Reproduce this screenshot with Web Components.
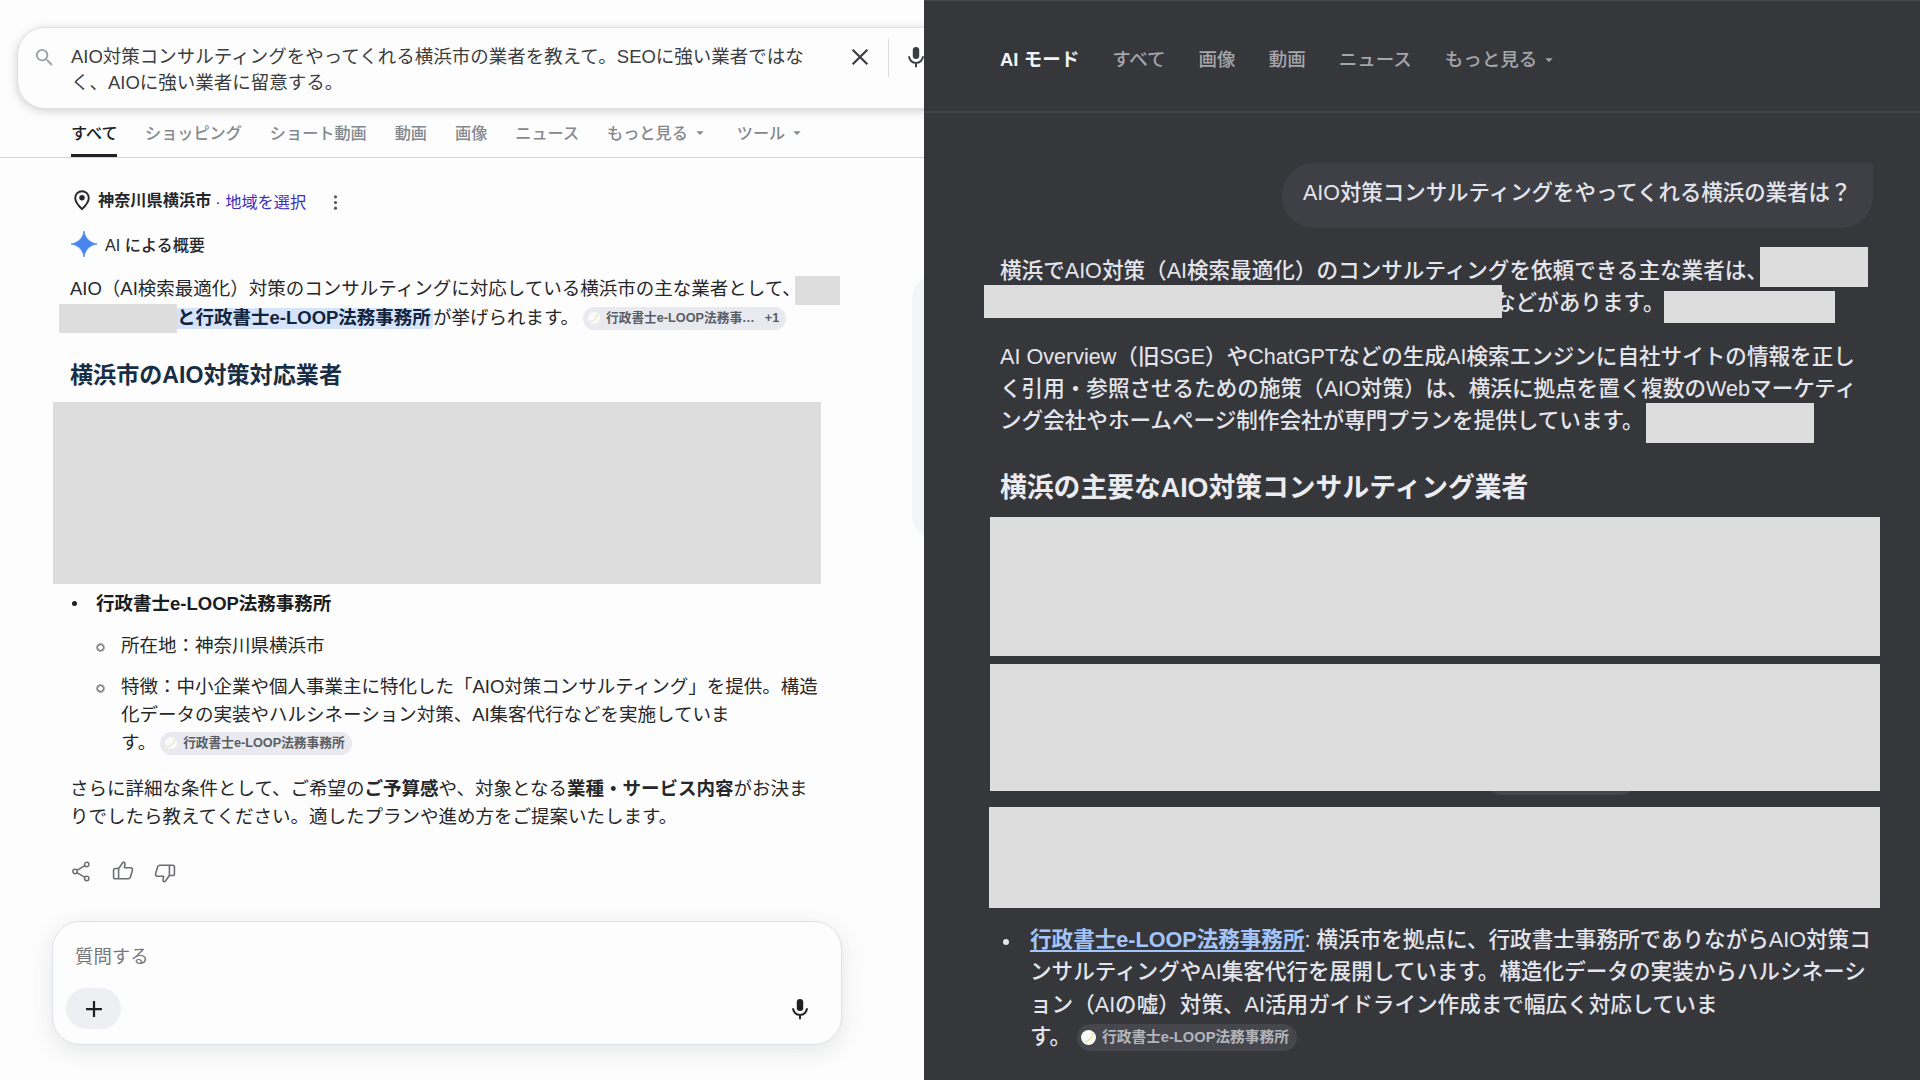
<!DOCTYPE html>
<html lang="ja">
<head>
<meta charset="utf-8">
<title>AIO対策</title>
<style>
    body {
        margin: 0;
        width: 1920px;
        height: 1080px;
        overflow: hidden;
        display: flex;
        font-family: "Liberation Sans", "Noto Sans CJK JP", sans-serif;
        text-spacing-trim: space-all;
        white-space: nowrap;
    }
</style>
</head>
<body>
<overview-panel></overview-panel>
<mode-panel></mode-panel>

<script>
    // 共通: シャドウルートにテンプレートを複製する
    class BaseElement extends HTMLElement {
        constructor() {
            super();
            const template = document.createElement('template');
            template.innerHTML = this.constructor.html;
            this.attachShadow({mode: 'open'}).appendChild(template.content.cloneNode(true));
        }
    }

    // アイコン
    const icons = {
        search: '<path d="M15.5 14h-.79l-.28-.27A6.47 6.47 0 0 0 16 9.5 6.5 6.5 0 1 0 9.5 16c1.61 0 3.09-.59 4.23-1.57l.27.28v.79l5 4.99L20.49 19l-4.99-5zm-6 0a4.5 4.5 0 1 1 0-9 4.5 4.5 0 0 1 0 9z" fill="currentColor"/>',
        close: '<path d="M4 4l16 16M20 4L4 20" fill="none" stroke="currentColor" stroke-width="2.4"/>',
        mic: '<rect x="8.5" y="1" width="7" height="13.2" rx="3.5" fill="currentColor"/><path d="M4.4 11.2a7.6 7.2 0 0 0 15.2 0M12 18.5v4.7" fill="none" stroke="currentColor" stroke-width="2.1"/>',
        pin: '<path d="M12 2.4a7.4 7.4 0 0 0-7.4 7.4c0 5 7.4 12.2 7.4 12.2s7.4-7.2 7.4-12.2A7.4 7.4 0 0 0 12 2.4z" fill="none" stroke="currentColor" stroke-width="2.1"/><circle cx="12" cy="9.6" r="3" fill="currentColor"/>',
        dots: '<circle cx="12" cy="4" r="2.2" fill="currentColor"/><circle cx="12" cy="12" r="2.2" fill="currentColor"/><circle cx="12" cy="20" r="2.2" fill="currentColor"/>',
        spark: '<path d="M12 0C12.9 6.6 17.4 11.1 24 12 17.4 12.9 12.9 17.4 12 24 11.1 17.4 6.6 12.9 0 12 6.6 11.1 11.1 6.6 12 0z" fill="currentColor" stroke="currentColor" stroke-width=".7"/>',
        share: '<g fill="none" stroke="currentColor" stroke-width="1.7"><circle cx="4.6" cy="12" r="2.5"/><circle cx="18" cy="4" r="2.5"/><circle cx="18" cy="20" r="2.5"/><path d="M6.8 10.7L15.8 5.3M6.8 13.3l9 5.4"/></g>',
        thumb: '<g fill="none" stroke="currentColor" stroke-width="1.7" stroke-linejoin="round"><path d="M7.2 9.3L11.3 3.5c.5-1.5 3.1-1.3 2.9.9l-.7 4h6.7c1.6 0 2.5 1.2 2.1 2.6l-2.2 7.6c-.4 1.3-1.2 1.9-2.5 1.9H3.700c-1.3 0-2-.8-2-2v-7.2c0-1.3.7-2 2-2h3.5z"/><path d="M7.2 9.3v11.2"/></g>',
        plus: '<path d="M12 2.5v19M2.5 12h19" fill="none" stroke="currentColor" stroke-width="2.7"/>',
        caret: '<path d="M1 7h22L12 18z" fill="currentColor"/>'
    };

    class UiIcon extends HTMLElement {
        constructor() {
            super();
            this.attachShadow({mode: 'open'});
        }

        connectedCallback() {
            this.shadowRoot.innerHTML = `
                <style>
                    :host { display: inline-block; width: 20px; height: 20px; flex: none; }
                    svg { display: block; width: 100%; height: 100%; overflow: visible; }
                </style>
                <svg viewBox="0 0 24 24">${icons[this.getAttribute('name')]}</svg>`;
        }
    }
    customElements.define('ui-icon', UiIcon);

    // グレーのマスク
    class MaskBlock extends BaseElement {
        static html = `
            <style>
                :host { display: block; background: #ddd; }
            </style>`;
    }
    customElements.define('mask-block', MaskBlock);

    // タブ
    class TabItem extends BaseElement {
        static html = `
            <style>
                :host {
                    display: flex;
                    align-items: center;
                    box-sizing: border-box;
                    height: 100%;
                    padding-bottom: 3px;
                    font-weight: 500;
                    color: var(--tab-color);
                }
                :host([active]) { color: var(--tab-active); }
                :host([underline]) { box-shadow: inset 0 -3px #202124; }
                ui-icon { display: none; width: 8px; height: 8px; margin: 3px 0 0 8px; }
                :host([menu]) ui-icon { display: block; }
            </style>
            <slot></slot><ui-icon name="caret"></ui-icon>`;
    }
    customElements.define('tab-item', TabItem);

    // 出典チップ
    class SourceChip extends BaseElement {
        static html = `
            <style>
                :host {
                    display: inline-flex;
                    align-items: center;
                    box-sizing: border-box;
                    height: 23px;
                    padding: 0 7px 0 5px;
                    border-radius: 14px;
                    background: var(--chip-bg, #e8eaf0);
                    color: var(--chip-color, #5a5d63);
                    font-size: 12.7px;
                    font-weight: 700;
                    line-height: 1;
                }
                svg { width: var(--fav, 12px); height: var(--fav, 12px); margin-right: var(--fav-gap, 6px); }
            </style>
            <svg viewBox="0 0 12 12">
                <circle cx="6" cy="6" r="6" fill="#fafbf8"/>
                <path d="M2 9.3Q5 9.8 7 7.5" fill="none" stroke="#f6d9a8" stroke-width="1"/>
                <path d="M6.3 8Q9.3 5.8 9.8 2" fill="none" stroke="#e3e48a" stroke-width="1"/>
            </svg>
            <slot></slot>`;
    }
    customElements.define('source-chip', SourceChip);

    // 検索ボックス
    class SearchField extends BaseElement {
        static html = `
            <style>
                :host {
                    display: flex;
                    box-sizing: border-box;
                    width: 1000px;
                    height: 82px;
                    margin: 27px 0 0 17px;
                    padding-left: 15px;
                    border: 1px solid #dddfe3;
                    border-radius: 28px;
                    background: #fdfdfd;
                    box-shadow: 0 2px 10px rgba(32, 33, 36, .2);
                    color: #3c3d40;
                }
                .find { width: 23px; height: 23px; margin: 18px 15px 0 0; color: #9aa0a6; }
                .query { width: 778px; padding-top: 16px; font-size: 18.5px; line-height: 25.5px; }
                ::slotted(span) { display: block; }
                .x { width: 22px; height: 22px; margin-top: 18px; }
                .rule { width: 1px; height: 38px; margin: 11px 16px 0 17px; background: #dadce0; }
                .voice { width: 22px; height: 22px; margin-top: 18px; }
            </style>
            <ui-icon class="find" name="search"></ui-icon>
            <div class="query"><slot></slot></div>
            <ui-icon class="x" name="close"></ui-icon>
            <div class="rule"></div>
            <ui-icon class="voice" name="mic"></ui-icon>`;
    }
    customElements.define('search-field', SearchField);

    // 追加の質問欄
    class AskBox extends BaseElement {
        static html = `
            <style>
                :host {
                    display: block;
                    box-sizing: border-box;
                    width: 790px;
                    height: 124px;
                    padding: 21px 30px 0 13px;
                    border: 1px solid #dfe1ea;
                    border-radius: 28px;
                    background: #fdfdfd;
                    box-shadow: 0 6px 24px rgba(60, 64, 67, .12);
                }
                .hint { padding-left: 9px; font-size: 18.4px; line-height: 28px; color: #75777b; }
                .row { display: flex; justify-content: space-between; align-items: center; margin-top: 17px; color: #1f1f1f; }
                .add { display: flex; align-items: center; justify-content: center; width: 55px; height: 41px; border-radius: 21px; background: #eeeff3; }
                .add ui-icon { width: 20px; height: 20px; }
                .voice { width: 22px; height: 22px; }
            </style>
            <div class="hint"><slot></slot></div>
            <div class="row">
                <div class="add"><ui-icon name="plus"></ui-icon></div>
                <ui-icon class="voice" name="mic"></ui-icon>
            </div>`;
    }
    customElements.define('ask-box', AskBox);

    // 左: 通常検索とAIによる概要
    class OverviewPanel extends BaseElement {
        static html = `
            <style>
                :host {
                    display: block;
                    position: relative;
                    flex: none;
                    width: 924px;
                    height: 1080px;
                    overflow: hidden;
                    background: #fdfdfd;
                    color: #25272a;
                    font-size: 18.5px;
                    --tab-color: #85898e;
                    --tab-active: #202124;
                }
                nav { display: flex; gap: 28px; height: 48px; padding-left: 71px; border-bottom: 1px solid #d4d5d8; font-size: 16.15px; }
                tab-item:first-child { width: 46px; }
                tab-item:last-child { margin-left: 5px; }
                .place { display: flex; align-items: center; height: 24px; margin: 30px 0 0 71px; font-size: 16.2px; }
                .place ui-icon { width: 22px; height: 22px; }
                .place b { margin: -3px 0 0 5px; }
                .place a { margin: 1px 0 0 4px; color: #4130bd; }
                .place .more { width: 17px; height: 17px; margin: 5px 0 0 21px; color: #55575b; }
                .title { display: flex; align-items: center; height: 28px; margin: 18px 0 0 71px; font-size: 16.15px; font-weight: 500; }
                .title ui-icon { width: 26px; height: 26px; margin-right: 8px; color: #4a85ee; }
                p { margin: 0 0 0 70px; line-height: 28px; }
                p > span { display: block; height: 28px; }
                .lead { margin-top: 17px; }
                .lead > span + span { padding-left: 107px; line-height: 29px; }
                mark { display: inline-block; height: 21px; line-height: 19px; padding-right: 2px; border-radius: 0 4px 4px 0; background: #d5e3fb; color: #11243c; font-weight: 700; }
                source-chip { vertical-align: middle; margin: -2px 0 0 4px; }
                source-chip i { margin-left: 10px; font-style: normal; }
                h2 { margin: 27px 0 0 70px; font-size: 23.1px; line-height: 34px; color: #172e45; }
                .cover { width: 768px; height: 182px; margin: 10px 0 0 53px; }
                .firm { display: flex; align-items: center; height: 28px; margin: 4px 0 0 72px; font-weight: 700; color: #1b1c1e; }
                .firm::before { content: ""; width: 5px; height: 5px; margin: 3px 19px 0 0; border-radius: 50%; background: #1f1f1f; }
                .item { display: flex; margin: 13px 0 0 97px; line-height: 28px; }
                .firm + .item { margin-top: 16px; }
                .item::before { content: ""; box-sizing: border-box; width: 7px; height: 7px; margin: 12px 17px 0 0; border: 1.5px solid #444; outline: .5px solid #999; outline-offset: -.5px; border-radius: 50%; }
                .item span { display: block; height: 28px; }
                .note { margin-top: 18px; }
                .acts { display: flex; gap: 20px; margin: 30px 0 0 71px; color: #6b6d70; }
                .acts ui-icon { width: 21px; height: 21px; }
                .acts ui-icon + ui-icon { width: 22px; height: 22px; margin-top: -1px; }
                .acts .down { transform: rotate(180deg); position: relative; top: 2px; }
                ask-box { margin: 39px 0 0 52px; }
                .side { position: absolute; left: 912px; top: 275px; width: 80px; height: 264px; border-radius: 24px; background: #f4f5f7; }
                mask-block.over { position: absolute; }
            </style>
            <search-field><span>AIO対策コンサルティングをやってくれる横浜市の業者を教えて。SEOに強い業者ではな</span><span>く、AIOに強い業者に留意する。</span></search-field>
            <nav>
                <tab-item active underline>すべて</tab-item>
                <tab-item>ショッピング</tab-item>
                <tab-item>ショート動画</tab-item>
                <tab-item>動画</tab-item>
                <tab-item>画像</tab-item>
                <tab-item>ニュース</tab-item>
                <tab-item menu>もっと見る</tab-item>
                <tab-item menu>ツール</tab-item>
            </nav>
            <div class="place"><ui-icon name="pin"></ui-icon><b>神奈川県横浜市</b><a>· 地域を選択</a><ui-icon class="more" name="dots"></ui-icon></div>
            <div class="title"><ui-icon name="spark"></ui-icon>AI による概要</div>
            <p class="lead">
                <span>AIO（AI検索最適化）対策のコンサルティングに対応している横浜市の主な業者として、</span>
                <span><mark>と行政書士e-LOOP法務事務所</mark>が挙げられます。<source-chip>行政書士e-LOOP法務事…<i>+1</i></source-chip></span>
            </p>
            <h2>横浜市のAIO対策対応業者</h2>
            <mask-block class="cover"></mask-block>
            <div class="firm">行政書士e-LOOP法務事務所</div>
            <div class="item"><div>所在地：神奈川県横浜市</div></div>
            <div class="item"><div>
                <span>特徴：中小企業や個人事業主に特化した「AIO対策コンサルティング」を提供。構造</span>
                <span>化データの実装やハルシネーション対策、AI集客代行などを実施していま</span>
                <span>す。<source-chip>行政書士e-LOOP法務事務所</source-chip></span>
            </div></div>
            <p class="note">
                <span>さらに詳細な条件として、ご希望の<b>ご予算感</b>や、対象となる<b>業種・サービス内容</b>がお決ま</span>
                <span>りでしたら教えてください。適したプランや進め方をご提案いたします。</span>
            </p>
            <div class="acts"><ui-icon name="share"></ui-icon><ui-icon name="thumb"></ui-icon><ui-icon class="down" name="thumb"></ui-icon></div>
            <ask-box>質問する</ask-box>
            <div class="side"></div>
            <mask-block class="over" style="left:795px;top:276px;width:45px;height:29px"></mask-block>
            <mask-block class="over" style="left:59px;top:304px;width:118px;height:29px"></mask-block>`;
    }
    customElements.define('overview-panel', OverviewPanel);

    // 右: AIモード
    class ModePanel extends BaseElement {
        static html = `
            <style>
                :host {
                    display: block;
                    position: relative;
                    box-sizing: border-box;
                    width: 996px;
                    height: 1080px;
                    overflow: hidden;
                    border-top: 1px solid #47484c;
                    background: #36373b;
                    color: #e4e5ec;
                    font-size: 21.58px;
                    font-weight: 500;
                    --tab-color: #a5a6ab;
                    --tab-active: #f3f3f6;
                    --chip-bg: #46474d;
                    --chip-color: #b4b5bb;
                    --fav: 15px;
                    --fav-gap: 6px;
                }
                nav { display: flex; gap: 33px; height: 110px; padding: 0 0 0 76px; border-bottom: 2px solid #424347; font-size: 18.5px; }
                nav tab-item { height: 117px; }
                nav tab-item[active] { font-weight: 700; }
                .ask { width: 591px; height: 65px; margin: 50px 0 0 358px; box-sizing: border-box; padding-left: 21px; border-radius: 32px 4px 32px 32px; background: #3f4045; font-size: 21.45px; line-height: 61px; }
                p { margin: 0 0 0 76px; line-height: 32px; }
                p > span { display: block; height: 32px; }
                .answer { margin-top: 26px; line-height: 33px; }
                .answer > span + span { padding-left: 494px; }
                .about { margin-top: 23px; }
                h2 { margin: 31px 0 0 76px; font-size: 26.8px; line-height: 40px; color: #ebecf2; }
                .cover { position: relative; width: 890px; margin-left: 66px; }
                .firm { display: flex; margin: 16px 0 0 79px; line-height: 32.3px; }
                .firm::before { content: ""; width: 6px; height: 6px; margin: 15px 21px 0 0; border-radius: 50%; background: #e4e5ec; }
                .firm span { display: block; height: 32.3px; }
                .firm a { color: #a3c5fa; font-weight: 700; text-decoration: underline; text-decoration-thickness: 2px; text-underline-offset: 3px; }
                .firm source-chip { height: 27px; padding: 0 8px 0 4px; margin: -1px 0 0 6px; font-size: 14.7px; vertical-align: middle; }
                .tail { position: absolute; left: 564px; top: 768px; width: 146px; height: 26px; border-radius: 13px; background: #46474d; }
                mask-block.over { position: absolute; }
            </style>
            <nav>
                <tab-item active>AI モード</tab-item>
                <tab-item>すべて</tab-item>
                <tab-item>画像</tab-item>
                <tab-item>動画</tab-item>
                <tab-item>ニュース</tab-item>
                <tab-item menu>もっと見る</tab-item>
            </nav>
            <div class="ask">AIO対策コンサルティングをやってくれる横浜の業者は？</div>
            <p class="answer">
                <span>横浜でAIO対策（AI検索最適化）のコンサルティングを依頼できる主な業者は、</span>
                <span>などがあります。</span>
            </p>
            <p class="about">
                <span>AI Overview（旧SGE）やChatGPTなどの生成AI検索エンジンに自社サイトの情報を正し</span>
                <span>く引用・参照させるための施策（AIO対策）は、横浜に拠点を置く複数のWebマーケティ</span>
                <span>ング会社やホームページ制作会社が専門プランを提供しています。</span>
            </p>
            <h2>横浜の主要なAIO対策コンサルティング業者</h2>
            <div class="tail"></div>
            <mask-block class="cover" style="height:139px;margin-top:9px"></mask-block>
            <mask-block class="cover" style="height:127px;margin-top:8px"></mask-block>
            <mask-block class="cover" style="height:101px;margin-top:16px;margin-left:65px;width:891px"></mask-block>
            <div class="firm"><div>
                <span><a>行政書士e-LOOP法務事務所</a>: 横浜市を拠点に、行政書士事務所でありながらAIO対策コ</span>
                <span>ンサルティングやAI集客代行を展開しています。構造化データの実装からハルシネーシ</span>
                <span>ョン（AIの嘘）対策、AI活用ガイドライン作成まで幅広く対応していま</span>
                <span>す。<source-chip>行政書士e-LOOP法務事務所</source-chip></span>
            </div></div>
            <mask-block class="over" style="left:836px;top:246px;width:108px;height:40px"></mask-block>
            <mask-block class="over" style="left:60px;top:284px;width:518px;height:33px"></mask-block>
            <mask-block class="over" style="left:740px;top:290px;width:171px;height:32px"></mask-block>
            <mask-block class="over" style="left:722px;top:402px;width:168px;height:40px"></mask-block>`;
    }
    customElements.define('mode-panel', ModePanel);
</script>
</body>
</html>
